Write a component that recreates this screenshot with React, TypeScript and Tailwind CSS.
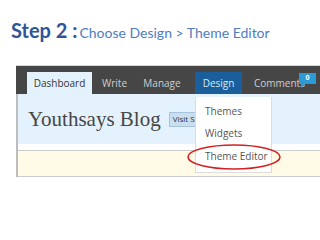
import React from "react";

const App = () => {
  return (
    <div className="w-[320px] h-[240px] bg-white overflow-hidden relative">
      {/* heading */}
      <div className="pl-[11px] pt-[15px] flex items-baseline text-[#2f5597]" style={{ fontFamily: "Lato, 'Open Sans', sans-serif" }}>
        <span className="text-[20px] font-bold">Step 2 :</span>
        <span className="text-[14px] text-[#4f7cc0] ml-[2px]">Choose Design &gt; Theme Editor</span>
      </div>

      {/* screenshot */}
      <div className="mt-[20px] ml-[16px] border-t border-[#d8d8d8]" style={{ fontFamily: "'Open Sans', sans-serif" }}>
        {/* nav bar */}
        <div className="h-[28px] bg-[#464646] flex items-end pl-[11px] text-[10px] whitespace-nowrap">
          <div className="w-[65px] h-[22px] flex items-center justify-center bg-[#e4f2fd] text-[#333]">Dashboard</div>
          <div className="w-[45px] h-[22px] flex items-center justify-center text-[#cfcfcf]">Write</div>
          <div className="w-[50px] h-[22px] flex items-center justify-center text-[#cfcfcf] mr-[8px]">Manage</div>
          <div className="w-[47px] h-[22px] flex items-center justify-center bg-[#1a5f9c] text-[#d9e8f5]">Design</div>
          <div className="h-[22px] flex items-center pl-[12px] text-[#cfcfcf] relative">
            Comments
            <span className="absolute left-[57px] top-[1px] bg-[#2b9ad6] text-white text-[7px] font-bold w-[17px] h-[11px] flex items-center justify-center">
              0
            </span>
            <span className="absolute left-[59px] top-[12px] w-0 h-0 border-t-[4px] border-t-[#2b9ad6] border-r-[4px] border-r-transparent" />
          </div>
        </div>

        <div className="border-l-[2px] border-[#bdbdbd]">
          {/* header */}
          <div className="h-[50px] bg-[#e4f2fd] flex items-center pl-[10px]">
            <span className="text-[21px] text-[#464646] leading-none" style={{ fontFamily: "'Liberation Serif', serif" }}>
              Youthsays Blog
            </span>
            <span className="ml-[8px] h-[15px] px-[3px] bg-[#c9dff0] border border-[#a7c3dc] text-[8px] text-[#333] flex items-center whitespace-nowrap">
              Visit Site
            </span>
          </div>
          <div className="h-[7px] bg-white border-b border-[#cccccc]" />
          <div className="h-[26px] bg-[#fffbe6] border-b border-[#cccccc]" />
        </div>
      </div>

      {/* dropdown */}
      <div
        className="absolute left-[195px] top-[97px] w-[77px] h-[76px] bg-white border border-[#dcdcdc] border-t-0 flex flex-col pl-[9px] text-[10px] text-[#555] whitespace-nowrap"
        style={{ fontFamily: "'Open Sans', sans-serif" }}
      >
        <div className="h-[25px] flex items-center pt-[3px]">Themes</div>
        <div className="h-[22px] flex items-center">Widgets</div>
        <div className="h-[24px] flex items-center">Theme Editor</div>
      </div>

      {/* red ellipse */}
      <svg className="absolute left-[186px] top-[143px]" width="96" height="28" viewBox="0 0 96 28">
        <ellipse cx="48" cy="14" rx="46" ry="12" fill="none" stroke="#d42020" strokeWidth="1.6" />
      </svg>
    </div>
  );
};

export default App;
